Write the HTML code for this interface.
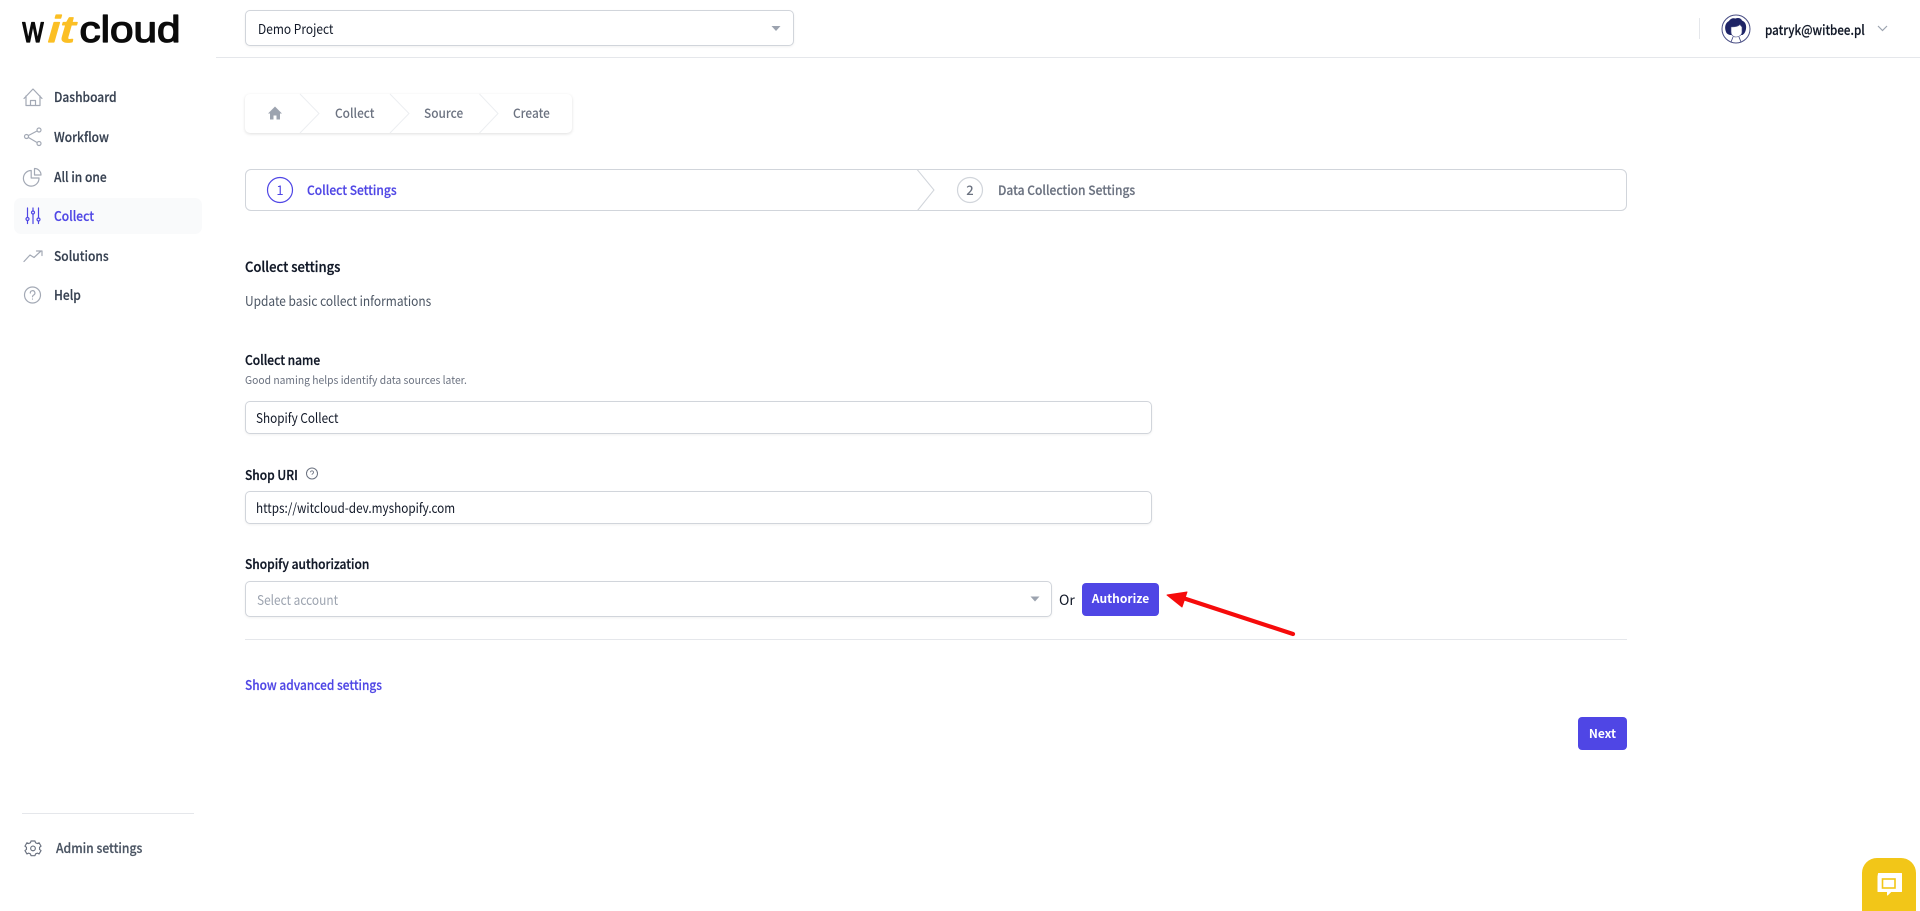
<!DOCTYPE html>
<html lang="en"><head><meta charset="utf-8"><title>Witcloud</title>
<style>
html,body{margin:0;padding:0;width:1920px;height:911px;overflow:hidden;background:#fff}
body{position:relative;font-family:"Noto Sans CJK JP","Liberation Sans",sans-serif;font-size:13.5px;color:#111827}
.t{position:absolute;white-space:nowrap;line-height:20px;height:20px;transform-origin:0 50%}
.b{position:absolute;box-sizing:border-box}
.nav{color:#374151;font-weight:500;font-size:13.5px;transform:scaleX(.89);-webkit-text-stroke:.2px currentColor}
.field{border:1px solid #d1d5db;border-radius:5px;background:#fff;box-shadow:0 1px 2px rgba(0,0,0,.06)}
.lab{font-weight:500;font-size:13.5px;color:#111827;transform:scaleX(.89);-webkit-text-stroke:.3px currentColor}
.btn{background:#4f46e5;border-radius:4px;color:#fff;font-weight:700;font-size:12px;text-align:center}
svg{position:absolute;left:0;top:0;overflow:visible}
</style></head><body>

<div class="b" style="left:216px;top:57px;width:1704px;height:1px;background:#e5e7eb"></div>
<div class="b field" style="left:245px;top:10px;width:549px;height:36px"></div>
<div class="t" style="left:258px;top:18px;font-size:13.5px;transform:scaleX(.884)">Demo Project</div>
<div class="b" style="left:1699px;top:18px;width:1px;height:21px;background:#e5e7eb"></div>
<div class="t" style="left:1765px;top:19px;font-weight:500;font-size:13.5px;transform:scaleX(.86);-webkit-text-stroke:.2px currentColor">patryk@witbee.pl</div>

<div class="b" style="left:14px;top:198px;width:188px;height:36px;background:#f9fafb;border-radius:7px"></div>
<div class="t nav" style="left:54px;top:86px">Dashboard</div>
<div class="t nav" style="left:54px;top:126px">Workflow</div>
<div class="t nav" style="left:54px;top:166px">All in one</div>
<div class="t nav" style="left:54px;top:205px;color:#4f46e5">Collect</div>
<div class="t nav" style="left:54px;top:245px">Solutions</div>
<div class="t nav" style="left:54px;top:284px">Help</div>
<div class="b" style="left:22px;top:813px;width:172px;height:1px;background:#e5e7eb"></div>
<div class="t" style="left:56px;top:837px;color:#4b5563;font-weight:500;font-size:13.5px;transform:scaleX(.9);-webkit-text-stroke:.2px currentColor">Admin settings</div>

<div class="b" style="left:245px;top:94px;width:327px;height:39px;background:#fff;border-radius:5px;box-shadow:0 1px 3px rgba(0,0,0,.13)"></div>
<div class="t" style="left:335px;top:103px;color:#6b7280;font-weight:500;font-size:13px;transform:scaleX(.914)">Collect</div>
<div class="t" style="left:424px;top:103px;color:#6b7280;font-weight:500;font-size:13px;transform:scaleX(.914)">Source</div>
<div class="t" style="left:513px;top:103px;color:#6b7280;font-weight:500;font-size:13px;transform:scaleX(.914)">Create</div>

<div class="b" style="left:245px;top:169px;width:1382px;height:42px;border:1px solid #d1d5db;border-radius:6px"></div>
<div class="t" style="left:307px;top:180px;color:#4f46e5;font-weight:500;font-size:13px;transform:scaleX(.925);-webkit-text-stroke:.2px currentColor">Collect Settings</div>
<div class="t" style="left:998px;top:180px;color:#6b7280;font-weight:500;font-size:13px;transform:scaleX(.925);-webkit-text-stroke:.2px currentColor">Data Collection Settings</div>

<div class="t" style="left:245px;top:257px;font-weight:500;font-size:14px;transform:scaleX(.93);-webkit-text-stroke:.3px currentColor">Collect settings</div>
<div class="t" style="left:245px;top:290px;color:#4b5563;font-size:13.5px;transform:scaleX(.884)">Update basic collect informations</div>

<div class="t lab" style="left:245px;top:349px">Collect name</div>
<div class="t" style="left:245px;top:370px;color:#6b7280;font-size:11px;transform:scaleX(.938)">Good naming helps identify data sources later.</div>
<div class="b field" style="left:245px;top:401px;width:907px;height:33px"></div>
<div class="t" style="left:256px;top:407px;font-size:13.5px;transform:scaleX(.87)">Shopify Collect</div>

<div class="t lab" style="left:245px;top:464px">Shop URI</div>
<div class="b field" style="left:245px;top:491px;width:907px;height:33px"></div>
<div class="t" style="left:256px;top:497px;font-size:13.5px;transform:scaleX(.87)">https://witcloud-dev.myshopify.com</div>

<div class="t lab" style="left:245px;top:553px">Shopify authorization</div>
<div class="b field" style="left:245px;top:581px;width:807px;height:36px"></div>
<div class="t" style="left:257px;top:589px;color:#9ca3af;font-size:13.5px;transform:scaleX(.88)">Select account</div>
<div class="t" style="left:1059px;top:590px;font-size:14px">Or</div>
<div class="b btn" style="left:1082px;top:583px;width:77px;height:33px;line-height:32px">Authorize</div>
<div class="b" style="left:245px;top:639px;width:1382px;height:1px;background:#e5e7eb"></div>
<div class="t" style="left:245px;top:674px;color:#4f46e5;font-weight:500;font-size:13.5px;transform:scaleX(.882);-webkit-text-stroke:.2px currentColor">Show advanced settings</div>
<div class="b btn" style="left:1578px;top:717px;width:49px;height:33px;line-height:33px">Next</div>

<div class="b" style="left:1862px;top:858px;width:54px;height:53px;background:#f2c618;border-radius:15px 15px 0 0"></div>

<svg width="1920" height="911" viewBox="0 0 1920 911" fill="none">
  <!-- logo -->
  <g font-family="Liberation Sans" font-size="37" stroke-width="1.300" stroke-linejoin="round">
    <text x="22.500" y="42" fill="#0b0b0b" stroke="#0b0b0b" textLength="21" lengthAdjust="spacingAndGlyphs">w</text>
    <text x="48" y="42" font-style="italic" fill="#fbbf24" stroke="#fbbf24" textLength="27" lengthAdjust="spacingAndGlyphs">it</text>
    <text x="79.500" y="42" fill="#0b0b0b" stroke="#0b0b0b" textLength="101" lengthAdjust="spacingAndGlyphs">cloud</text>
  </g>

  <!-- nav icons -->
  <g stroke="#a3a9b5" stroke-width="1.200" stroke-linecap="round" stroke-linejoin="round">
    <path d="M24 98.500 33 89l9 9.500M26 96v9.500h14V96M30.500 105.500v-5h5v5"/>
    <circle cx="39" cy="130" r="2"/><circle cx="26.500" cy="136.500" r="2"/><circle cx="39" cy="143.500" r="2"/>
    <path d="M28.500 135.500 37 131M28.500 137.500 37 142.500"/>
    <path d="M39 178A7.800 7.800 0 1 1 31.200 170.500V178z"/><path d="M34.500 168.500a6.500 6.500 0 0 1 6.500 6.500h-6.500z"/>
    <path d="M24 261.500 30 255l4 2.500 7-6.500M36.500 251H42v4.500"/>
    <circle cx="32.500" cy="295" r="8"/>
    <path d="M30.300 293a2.300 2.300 0 1 1 3.400 2c-.9.500-1.200 1-1.200 1.800M32.500 299v.1"/>
  </g>
  <g stroke="#4f46e5" stroke-width="1.200" stroke-linecap="round">
    <path d="M27.500 208v9M27.500 221v2.500M33 208v2.500M33 214.500v9M38.500 208v10M38.500 221.500v2"/>
    <circle cx="27.500" cy="219" r="1.500"/><circle cx="33" cy="212.500" r="1.500"/><circle cx="38.500" cy="219.500" r="1.500"/>
  </g>
  <!-- gear -->
  <g stroke="#6b7280" stroke-width="1.500" stroke-linejoin="round" transform="translate(33 848) scale(.78) translate(-33 -848)">
    <path d="M30.500 839h5l.8 2.300 2.300 1 2.200-1 2.500 4.300-1.900 1.500v2.700l1.900 1.500-2.500 4.300-2.200-1-2.300 1-.8 2.300h-5l-.8-2.300-2.300-1-2.200 1-2.500-4.300 1.900-1.500v-2.700l-1.900-1.500 2.500-4.300 2.200 1 2.300-1z"/>
    <circle cx="33" cy="848.500" r="3"/>
  </g>

  <!-- top select caret + user chevron + avatar -->
  <path d="M771.500 26h9l-4.500 5z" fill="#9ca3af"/>
  <path d="M1878 26l4.500 4.500 4.500-4.500" stroke="#9ca3af" stroke-width="1.200"/>
  <circle cx="1736" cy="29" r="14" stroke="#4a4f85" stroke-width="1" fill="#fff"/>
  <path d="M1726.500 33c-2.500-5-1.500-10 2.500-12 2-3 4.500-3 6.500-2.500 2.500-1 5.500-.5 6.500 2 4 1.500 5 6 3.500 10.500-.5 1.500-1.500 3-3 4H1730c-1.500-.5-2.700-1-3.500-2z" fill="#1e2466"/>
  <path d="M1731 27c3 0 7-.5 9-2.500.5 1 1.500 2 2 2.500v5c0 3-3 5-6 5s-5-2-5-5z" fill="#fff" stroke="#4a4f85" stroke-width=".6"/>
  <path d="M1731 42l2-5M1741 42l-2-5" stroke="#4a4f85" stroke-width=".9"/>

  <!-- breadcrumb -->
  <path d="M268 113.500 275 106.500l7 7h-2v6h-3.500v-4h-3v4h-3.500v-6z" fill="#9ca3af"/>
  <path d="M300 94 319 113.500 300 133M390 94 409 113.500 390 133M479.500 94 498 113.500 479.500 133" stroke="#eceef1" stroke-width="1"/>

  <!-- steps -->
  <path d="M918 170h-.5l16.500 20-16.500 20.500" stroke="#d1d5db" fill="#fff" stroke-width="1"/>
  <circle cx="280" cy="190" r="12.500" stroke="#4f46e5" stroke-width="1.200" fill="#fff"/>
  <text x="280" y="195" text-anchor="middle" font-family="Noto Sans CJK JP,Liberation Sans" font-size="13" fill="#4f46e5">1</text>
  <circle cx="970" cy="190" r="12.500" stroke="#d1d5db" stroke-width="1.200" fill="#fff"/>
  <text x="970" y="195" text-anchor="middle" font-family="Noto Sans CJK JP,Liberation Sans" font-size="13" fill="#6b7280" font-weight="500">2</text>

  <!-- shop uri help -->
  <circle cx="312" cy="473.500" r="5.500" stroke="#6b7280" stroke-width="1"/>
  <path d="M310.500 472.300a1.500 1.500 0 1 1 2.300 1.300c-.6.300-.8.700-.8 1.200M312 476.300v.1" stroke="#6b7280" stroke-width=".9"/>

  <!-- select caret -->
  <path d="M1030.500 596.500h9l-4.500 5z" fill="#9ca3af"/>

  <!-- red arrow -->
  <path d="M1293 634 1183 598" stroke="#f60b0b" stroke-width="4.200" stroke-linecap="round"/>
  <path d="M1167 595 1187 592 1182 607z" fill="#f60b0b" stroke="#f60b0b" stroke-width="1" stroke-linejoin="round"/>

  <!-- chat -->
  <path d="M1879 873h23v18h-10.500l-3.500 3.500V891h-9.500v-15z" fill="#fff" stroke="#fff" stroke-width="1" stroke-linejoin="round" transform="translate(-.5 .5)"/>
  <rect x="1882.500" y="879" width="12.500" height="9" stroke="#f2c618" stroke-width="1.600" fill="none"/>
</svg>
</body></html>
